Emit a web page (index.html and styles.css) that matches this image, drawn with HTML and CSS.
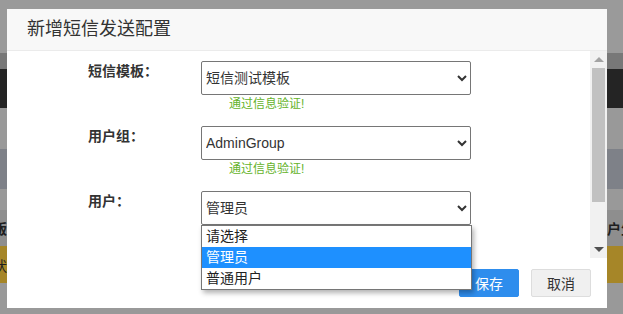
FILE: index.html
```html
<!DOCTYPE html>
<html lang="zh-CN">
<head>
    <meta charset="UTF-8">
    <meta name="viewport" content="width=device-width, initial-scale=1.0">
    <title>新增短信发送配置</title>
    <link rel="stylesheet" href="styles.css">
</head>
<body>
<!-- page behind the mask -->
<div class="page">
    <div class="band band-top"></div>
    <div class="band band-tabs"></div>
    <div class="band band-nav"></div>
    <div class="band band-light"></div>
    <div class="band band-slate"></div>
    <div class="band band-light2"></div>
    <div class="band band-head">
        <span class="cell-left">版</span>
        <span class="cell-right">户生</span>
    </div>
    <div class="band band-gold">
        <span class="cell-left">状</span>
    </div>
</div>

<div class="modal">
    <div class="modal-header">新增短信发送配置</div>
    <div class="modal-body">
        <form class="form" id="smsForm">
            <div class="form-row">
                <label for="tpl">短信模板：</label>
                <div class="field">
                    <select id="tpl" name="tpl">
                        <option>短信测试模板</option>
                    </select>
                    <p class="ok">通过信息验证!</p>
                </div>
            </div>
            <div class="form-row">
                <label for="group">用户组：</label>
                <div class="field">
                    <select id="group" name="group">
                        <option>AdminGroup</option>
                    </select>
                    <p class="ok">通过信息验证!</p>
                </div>
            </div>
            <div class="form-row">
                <label for="user">用户：</label>
                <div class="field">
                    <select id="user" name="user">
                        <option>管理员</option>
                    </select>
                    <ul class="dropdown">
                        <li>请选择</li>
                        <li class="active">管理员</li>
                        <li>普通用户</li>
                    </ul>
                </div>
            </div>
        </form>
        <div class="scrollbar">
            <div class="arrow-up"></div>
            <div class="track"><div class="thumb"></div></div>
            <div class="arrow-down"></div>
        </div>
    </div>
    <div class="modal-footer">
        <button type="submit" form="smsForm" class="btn btn-primary">保存</button>
        <button type="button" class="btn">取消</button>
    </div>
</div>
</body>
</html>
```

FILE: styles.css
```css
body {
    margin: 0;
    height: 314px;
    overflow: hidden;
    background-color: #999;
    font-family: "Liberation Sans", "Noto Sans CJK SC", sans-serif;
    color: #333;
}
.page {
    height: 314px;
}
.band {
    display: flex;
    justify-content: space-between;
    align-items: center;
    font-size: 14px;
    font-weight: bold;
    color: #1e1e1e;
}
.band-top { height: 53px; background-color: #9a9a9a; }
.band-tabs { height: 16px; background-color: #787878; }
.band-nav { height: 39px; background-color: #242424; }
.band-light { height: 41px; background-color: #999; }
.band-slate { height: 40px; background-color: #7e8188; }
.band-light2 { height: 21px; background-color: #999; }
.band-head { height: 36px; background-color: #8e8e8e; }
.band-gold { height: 37px; background-color: #a68628; font-weight: normal; }
.cell-left {
    width: 7px;
    display: flex;
    justify-content: flex-end;
    white-space: nowrap;
}
.cell-right {
    width: 16px;
    white-space: nowrap;
    overflow: hidden;
}

.modal {
    position: absolute;
    left: 7px;
    top: 9px;
    width: 600px;
    height: 299px;
    background-color: #fff;
    display: flex;
    flex-direction: column;
}
.modal-header {
    height: 41px;
    line-height: 41px;
    padding-left: 20px;
    font-size: 18px;
    color: #333;
    background-color: #f8f8f8;
    border-bottom: 1px solid #ebebeb;
}
.modal-body {
    height: 207px;
    display: flex;
}
.form {
    flex: 1;
    padding-top: 10px;
}
.form-row {
    display: flex;
    margin-bottom: 13px;
}
.form-row label {
    width: 113px;
    padding-left: 81px;
    padding-top: 1px;
    font-size: 14px;
    font-weight: bold;
    line-height: 18px;
}
.field {
    position: relative;
    width: 270px;
}
select {
    width: 270px;
    height: 34px;
    padding: 0;
    font-family: "Liberation Sans", "Noto Sans CJK SC", sans-serif;
    font-size: 14px;
    color: #333;
    border: 1px solid #767676;
    border-radius: 2px;
    background-color: #fff;
}
.ok {
    margin: 0 0 0 28px;
    height: 18px;
    line-height: 18px;
    font-size: 12px;
    color: #65b32b;
}
.dropdown {
    position: absolute;
    top: 34px;
    left: 0;
    width: 269px;
    margin: 0;
    padding: 0;
    list-style: none;
    background-color: #fff;
    border: 1px solid #767676;
    box-shadow: 2px 3px 5px rgba(0, 0, 0, 0.3);
    z-index: 2;
}
.dropdown li {
    height: 21px;
    line-height: 21px;
    padding-left: 4px;
    font-size: 14px;
    color: #222;
}
.dropdown li.active {
    background-color: #1e90ff;
    color: #fff;
}

.scrollbar {
    width: 17px;
    background-color: #f1f1f1;
    display: flex;
    flex-direction: column;
    align-items: center;
}
.arrow-up, .arrow-down {
    width: 0;
    height: 0;
    border-left: 5px solid transparent;
    border-right: 5px solid transparent;
    margin: 6px 0;
}
.arrow-up { border-bottom: 5px solid #a3a3a3; }
.arrow-down { border-top: 5px solid #505050; }
.track {
    flex: 1;
    width: 13px;
}
.thumb {
    height: 134px;
    background-color: #c1c1c1;
}

.modal-footer {
    height: 50px;
    display: flex;
    justify-content: flex-end;
    align-items: flex-start;
    gap: 12px;
    padding: 11px 16px 0 0;
    box-sizing: border-box;
}
.btn {
    width: 60px;
    height: 28px;
    font-family: "Liberation Sans", "Noto Sans CJK SC", sans-serif;
    font-size: 14px;
    color: #333;
    background-color: #f0f0f0;
    border: 1px solid #ddd;
    border-radius: 2px;
    cursor: pointer;
}
.btn-primary {
    color: #fff;
    background-color: #2e8ded;
    border-color: #2e8ded;
}
```
